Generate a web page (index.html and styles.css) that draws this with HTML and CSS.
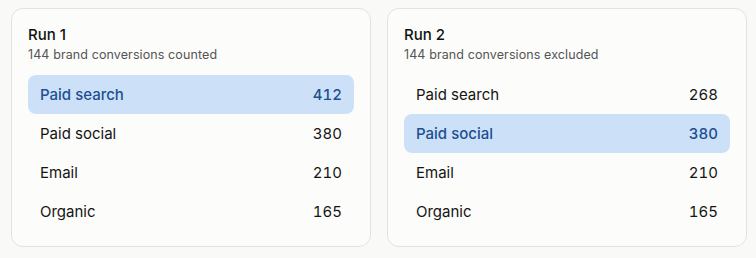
FILE: index.html
```html
<!DOCTYPE html>
<html lang="en">
<head>
<meta charset="utf-8">
<title>Runs</title>
<link rel="stylesheet" href="styles.css">
</head>
<body>
<main class="runs">
  <section class="card">
    <h2 class="card-title">Run 1</h2>
    <p class="card-sub">144 brand conversions counted</p>
    <ul class="rows">
      <li class="row is-active"><span>Paid search</span><span class="num">412</span></li>
      <li class="row"><span>Paid social</span><span class="num">380</span></li>
      <li class="row"><span>Email</span><span class="num">210</span></li>
      <li class="row"><span>Organic</span><span class="num">165</span></li>
    </ul>
  </section>
  <section class="card">
    <h2 class="card-title">Run 2</h2>
    <p class="card-sub">144 brand conversions excluded</p>
    <ul class="rows">
      <li class="row"><span>Paid search</span><span class="num">268</span></li>
      <li class="row is-active"><span>Paid social</span><span class="num">380</span></li>
      <li class="row"><span>Email</span><span class="num">210</span></li>
      <li class="row"><span>Organic</span><span class="num">165</span></li>
    </ul>
  </section>
</main>
</body>
</html>
```
FILE: styles.css
```css
* { box-sizing: border-box; }
html, body {
  margin: 0;
  background: #f9f9f7;
  font-family: Inter, "Noto Sans", sans-serif;
  color: #141414;
}
.runs {
  display: grid;
  grid-template-columns: 360px 360px;
  gap: 16px;
  padding: 8px 0 0 11px;
}
.card {
  background: #fcfcfa;
  border: 1px solid #e2e2df;
  border-radius: 12px;
  padding: 16px 16px 15px;
  height: 239px;
}
.card-title {
  margin: 0;
  font-size: 15px;
  line-height: 20px;
  font-weight: 500;
  color: #111;
}
.card-sub {
  margin: 2px 0 0;
  font-size: 12.5px;
  letter-spacing: 0.1px;
  line-height: 16px;
  color: #555;
}
.rows {
  list-style: none;
  margin: 12px 0 0;
  padding: 0;
}
.row {
  display: flex;
  justify-content: space-between;
  align-items: center;
  height: 39px;
  padding: 0 12px;
  border-radius: 8px;
  font-size: 15px;
  color: #141414;
}
.num { font-variant-numeric: tabular-nums; }
.row.is-active {
  background: #cce1f8;
  color: #1d4f91;
  font-weight: 500;
}
```
